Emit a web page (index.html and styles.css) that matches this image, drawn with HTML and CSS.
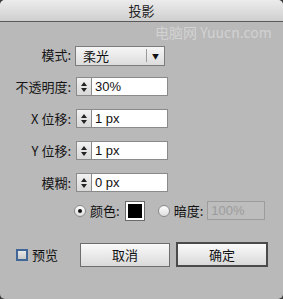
FILE: index.html
```html
<!DOCTYPE html>
<html lang="zh">
<head>
<meta charset="utf-8">
<link rel="stylesheet" href="styles.css">
</head>
<body>
<div class="dialog">
  <div class="titlebar">投影</div>
  <div class="watermark">电脑网 Yuucn.com</div>
  <div class="form">
    <div class="row">
      <span class="label">模式:</span>
      <div class="select"><span class="sel-text">柔光</span><span class="sel-arrow">▼</span></div>
    </div>
    <div class="row">
      <span class="label">不透明度:</span>
      <div class="spinner"><span class="up"></span><span class="down"></span></div>
      <div class="input">30%</div>
    </div>
    <div class="row">
      <span class="label">X 位移:</span>
      <div class="spinner"><span class="up"></span><span class="down"></span></div>
      <div class="input">1 px</div>
    </div>
    <div class="row">
      <span class="label">Y 位移:</span>
      <div class="spinner"><span class="up"></span><span class="down"></span></div>
      <div class="input">1 px</div>
    </div>
    <div class="row">
      <span class="label">模糊:</span>
      <div class="spinner"><span class="up"></span><span class="down"></span></div>
      <div class="input">0 px</div>
    </div>
    <div class="radio-row">
      <span class="radio checked"></span>
      <span class="rlabel">颜色:</span>
      <span class="swatch"></span>
      <span class="radio"></span>
      <span class="rlabel">暗度:</span>
      <div class="input disabled">100%</div>
    </div>
  </div>
  <div class="footer">
    <span class="checkbox"></span>
    <span class="preview">预览</span>
    <div class="btn cancel">取消</div>
    <div class="btn ok">确定</div>
  </div>
</div>
</body>
</html>
```

FILE: styles.css
```css
html, body {
  margin: 0;
  padding: 0;
  background: #3a3a3a;
}
body {
  font-family: "Noto Sans CJK SC", "Liberation Sans", sans-serif;
  font-size: 13px;
  color: #111;
}
.dialog {
  position: relative;
  width: 283px;
  height: 299px;
  background: #b9b9b9;
  border-radius: 5px;
  overflow: hidden;
}
.titlebar {
  height: 21px;
  line-height: 22px;
  text-align: center;
  font-size: 13px;
  color: #222;
  background: linear-gradient(#ececec, #cfcfcf);
  border-bottom: 1px solid #5a5a5a;
}
.watermark {
  position: absolute;
  left: 155px;
  top: 22px;
  font-size: 14px;
  color: #d2d2d2;
}
.form {
  display: flex;
  flex-direction: column;
  gap: 13px;
  padding-top: 23px;
}
.row {
  display: flex;
  align-items: center;
  height: 19px;
}
.label {
  width: 76px;
  text-align: right;
  padding-right: 5px;
  box-sizing: border-box;
  color: #151515;
}
.select {
  display: flex;
  align-items: center;
  width: 90px;
  height: 20px;
  box-sizing: border-box;
  border: 1px solid #7c7c7c;
  background: linear-gradient(#f6f6f6, #dcdcdc);
  margin-top: 2px;
  margin-left: -1px;
}
.sel-text {
  flex: 1;
  padding-left: 7px;
  border-right: 1px solid #9a9a9a;
  line-height: 13px;
}
.sel-arrow {
  width: 17px;
  text-align: center;
  font-size: 7px;
}
.spinner {
  width: 16px;
  height: 19px;
  box-sizing: border-box;
  border: 1px solid #8a8a8a;
  background: linear-gradient(#f2f2f2, #d8d8d8);
  display: flex;
  flex-direction: column;
  align-items: center;
  justify-content: center;
  gap: 2px;
}
.up, .down {
  width: 0;
  height: 0;
  border-left: 3px solid transparent;
  border-right: 3px solid transparent;
}
.up { border-bottom: 4px solid #222; }
.down { border-top: 4px solid #222; }
.input {
  width: 76px;
  height: 19px;
  box-sizing: border-box;
  border: 1px solid #8a8a8a;
  border-left: none;
  background: #fff;
  font-family: "Liberation Sans", sans-serif;
  font-size: 13px;
  line-height: 17px;
  padding-left: 3px;
  color: #111;
}
.radio-row {
  display: flex;
  align-items: center;
  height: 19px;
  margin-top: -4px;
  padding-left: 74px;
}
.radio {
  width: 12px;
  height: 12px;
  box-sizing: border-box;
  border-radius: 50%;
  border: 1px solid #8a8a8a;
  background: linear-gradient(#fdfdfd, #dedede);
  margin-right: 4px;
  position: relative;
}
.radio.checked::after {
  content: "";
  position: absolute;
  left: 3px;
  top: 3px;
  width: 4px;
  height: 4px;
  border-radius: 50%;
  background: #111;
}
.rlabel { margin-right: 4px; }
.swatch {
  width: 18px;
  height: 18px;
  box-sizing: border-box;
  border: 2px solid #fff;
  outline: 1px solid #6a6a6a;
  background: #000;
  margin: 0 14px 0 2px;
}
.input.disabled {
  border: 1px solid #9c9c9c;
  background: #bdbdbd;
  color: #9c9c9c;
  width: 58px;
  margin-left: 0;
}
.footer {
  display: flex;
  align-items: center;
  padding: 22px 0 0 16px;
}
.checkbox {
  width: 12px;
  height: 12px;
  box-sizing: border-box;
  border: 2px solid #3f6696;
  background: linear-gradient(#e8e8e8, #c8c8c8);
  margin-right: 4px;
}
.preview { width: 48px; }
.btn {
  height: 24px;
  box-sizing: border-box;
  border: 1px solid #6d6d6d;
  background: linear-gradient(#fafafa, #dadada);
  text-align: center;
  line-height: 22px;
  color: #111;
}
.cancel { width: 90px; margin-right: 6px; }
.ok {
  width: 92px;
  height: 25px;
  border: 2px solid #4a4a4a;
  line-height: 21px;
}
```
